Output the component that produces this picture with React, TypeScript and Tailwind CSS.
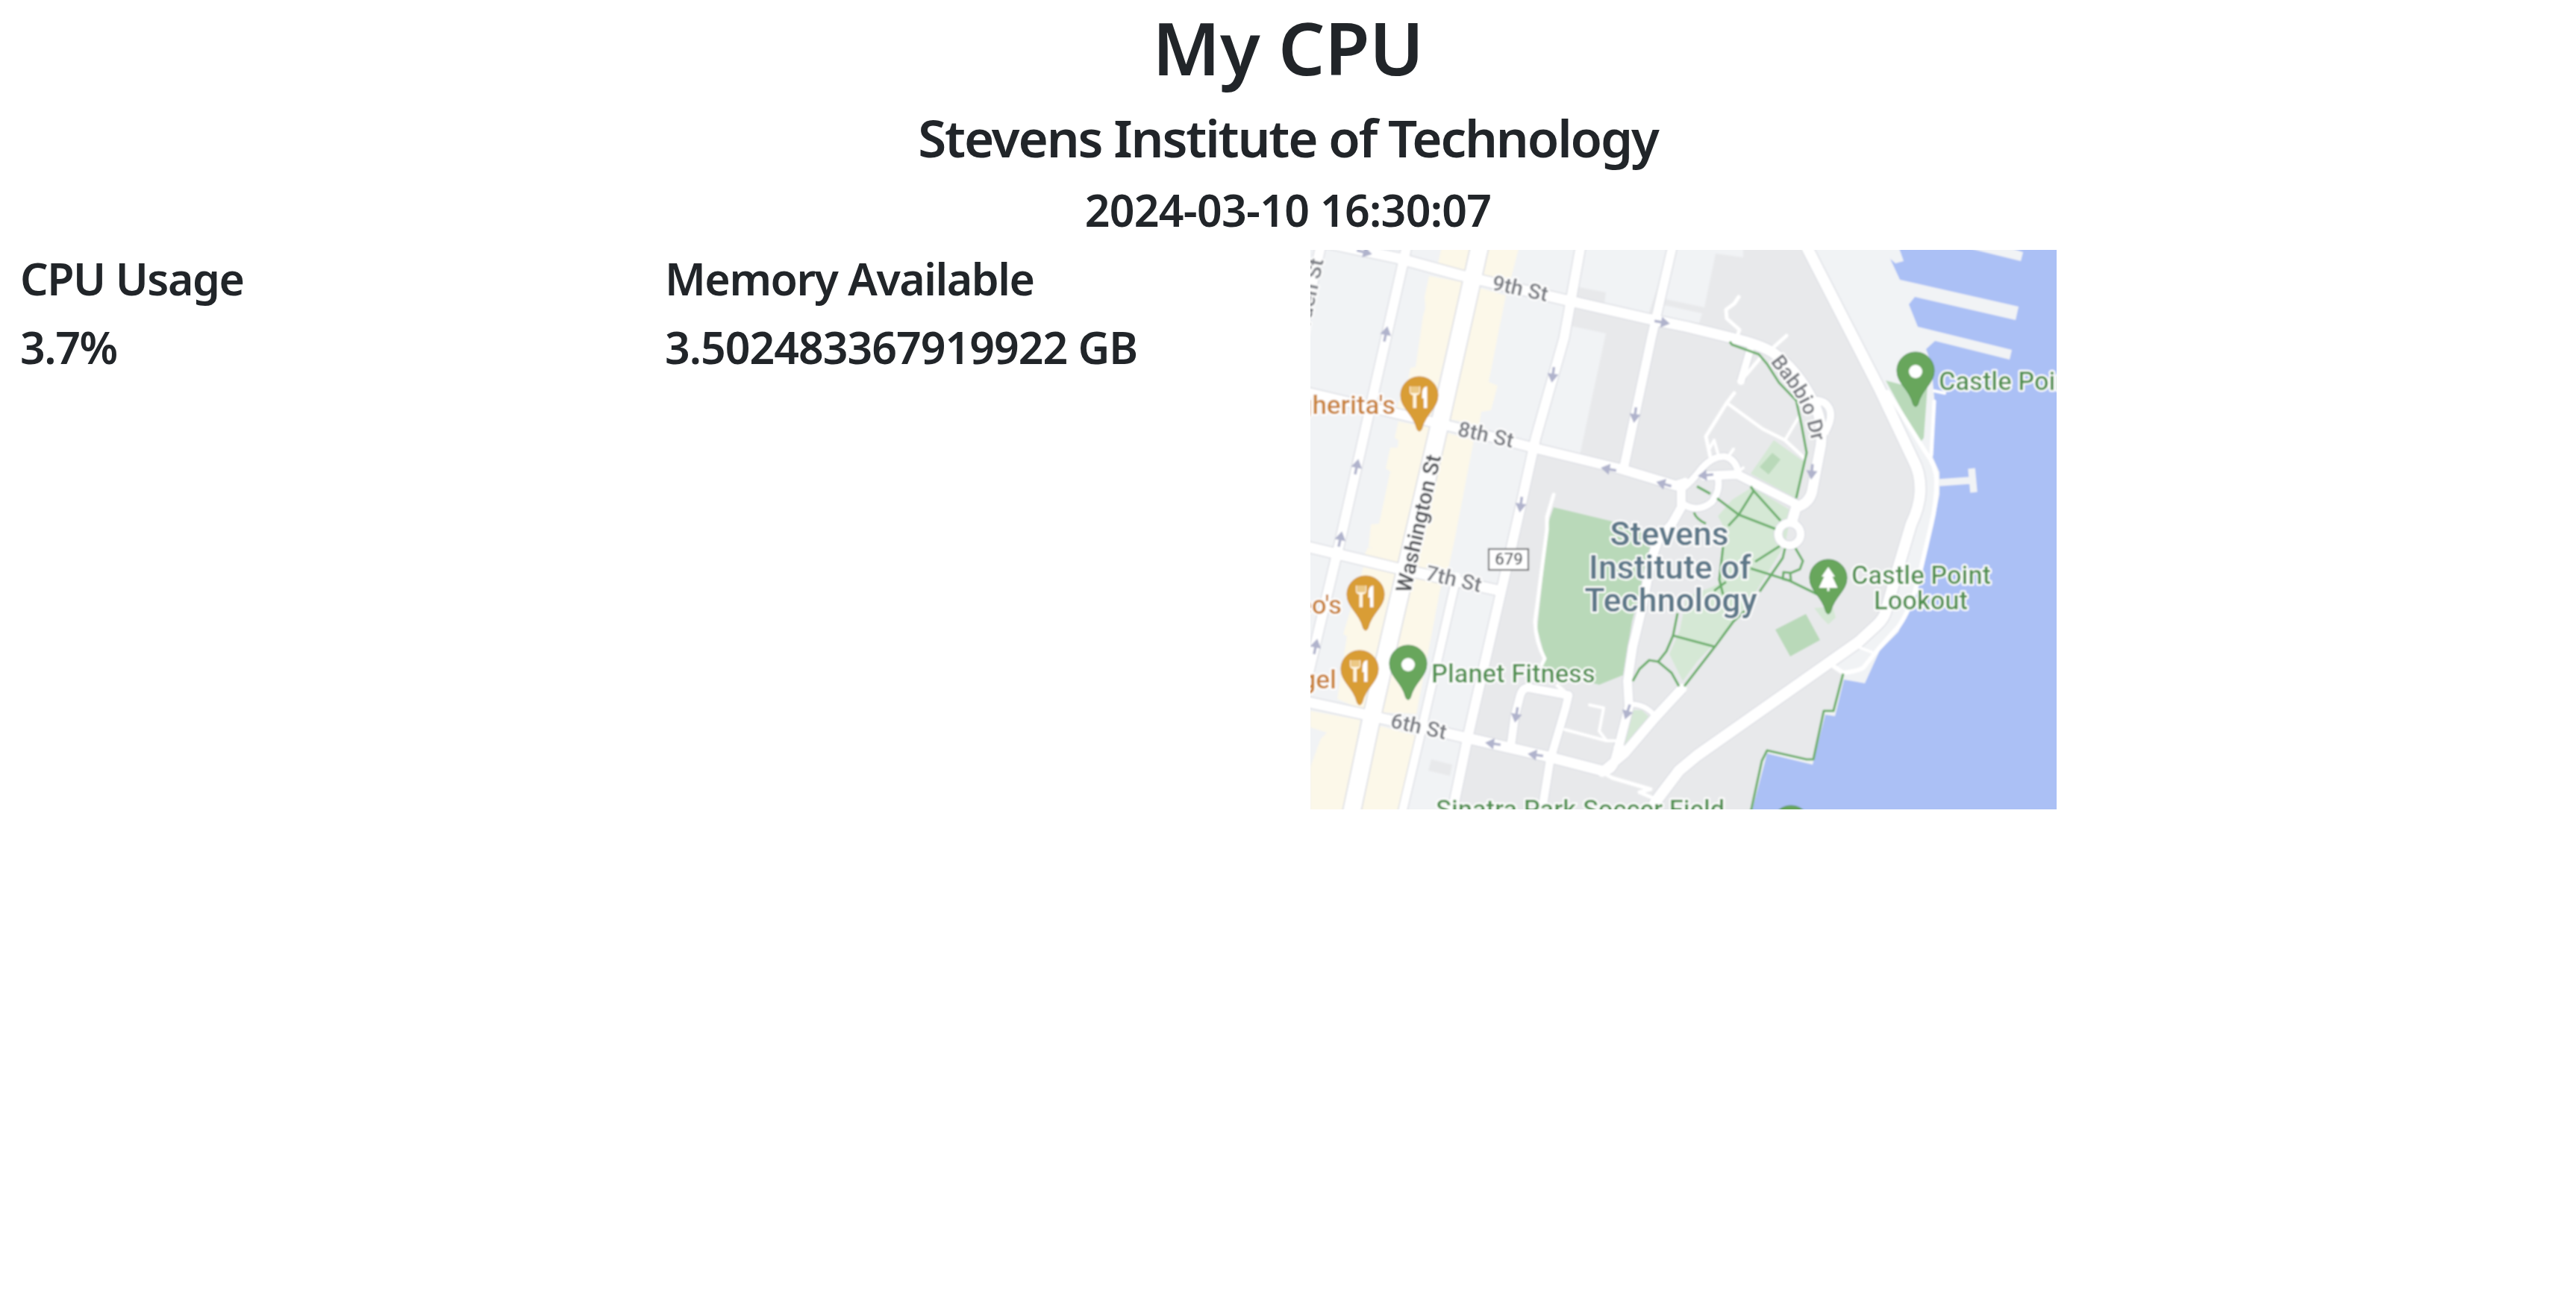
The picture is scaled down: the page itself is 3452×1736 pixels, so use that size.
import React from "react";

type Road = { d: string; w: number };

const roads: Road[] = [
  { d: "M14 -6 L-8 95", w: 13 },
  { d: "M129 -4 L41 385 L-2 565", w: 13 },
  { d: "M362 -4 L340 118 L302 252 L277 365 L254 465 L212 648 L190 754", w: 13 },
  { d: "M485 -4 L457 118 L420 292", w: 12 },
  { d: "M196 438 L167 565 L144 665 L123 754", w: 11 },
  { d: "M-20 -18 L117 11 L201 34 L337 66 L451 92 L504 103 L565 118 Q600 126 619 137 Q652 160 672 200 Q688 228 684 262 L672 325 Q668 340 651 345 L646 362", w: 14 },
  { d: "M672 202 Q690 200 696 214 Q700 226 690 244", w: 10 },
  { d: "M-4 191 L127 222 L190 237 L294 264 L417 294 L490 316 L502 312", w: 13 },
  { d: "M-4 398 L117 427 L250 456", w: 14 },
  { d: "M-4 606 L74 623 L200 652 L317 679 L390 698", w: 14 },
  { d: "M390 698 Q402 700 407 688 L414 662 L427 612 L425 578 L432 532 L444 482 L457 415 L467 386 L484 368 L497 345 L497 320", w: 12 },
  { d: "M391 700 L421 675 L461 628 L498 588", w: 13 },
  { d: "M412 668 L424 672", w: 12 },
  { d: "M427 609 Q448 608 461 624", w: 7 },
  { d: "M269 662 L274 625 L281 598 Q284 587 292 587 L346 597 L342 614 L321 685 L310 754", w: 11 },
  { d: "M498 320 Q510 312 525 292 Q540 276 555 277 Q570 280 574 300", w: 9 },
  { d: "M528 303 L572 301 L651 341", w: 12 },
  { d: "M546 305 Q550 322 538 338 Q518 354 497 339", w: 9 },
  { d: "M665 -4 L762 185 L808 282 Q818 300 817 325 Q816 345 805 368 L788 425 L772 482 Q769 494 759 503 L734 526 L697 552 L518 678 L494 698 L466 735 L450 760", w: 15 },
  { d: "M589 135 L577 176", w: 10 },
];

const lanes: Road[] = [
  { d: "M574 63 L568 72 L557 80 L558 92 L575 107 L572 116", w: 5 },
  { d: "M638 115 L619 132", w: 5 },
  { d: "M580 172 L602 146", w: 5 },
  { d: "M568 192 L558 205 L530 250 L536 278", w: 5 },
  { d: "M558 205 L606 240 L636 255 L663 280", w: 4.5 },
  { d: "M655 223 L636 255", w: 4 },
  { d: "M535 266 L541 255 L547 276", w: 4 },
  { d: "M567 267 L560 277 M574 297 L580 292", w: 4 },
  { d: "M341 643 L397 658 L409 658", w: 4 },
  { d: "M374 610 L393 614 L387 645 L397 658", w: 4 },
  { d: "M394 702 L405 708 L456 723 L441 727 L462 736", w: 5 },
  { d: "M326 328 L317 358 L317 375 L301 498 Q302 526 314 548 L310 556", w: 5 },
  { d: "M331 584 L345 596", w: 5 },
  { d: "M762 190 L774 191 L825 272 Q839 290 839 310 Q839 340 832 368 L817 432 Q806 480 788 505 L761 535 L741 560 Q736 564 714 567 L698 556", w: 6 },
  { d: "M736 533 L754 540", w: 4 },
  { d: "M836 203 L832 275", w: 5 },
  { d: "M836 189 L850 192", w: 4 },
];

const footpaths = [
  "M562 123 L565 127 L601 140 L612 153 L628 178 L651 202 L658 234 L665 272 L651 333",
  "M518 317 L536 327",
  "M545 333 L574 355 L623 374",
  "M590 317 L594 323 L574 355 L560 370",
  "M594 323 L630 363",
  "M514 352 Q517 361 530 367",
  "M629 397 L596 418",
  "M590 427 L641 443 L680 462",
  "M636 400 L633 413 L602 458",
  "M582 484 L567 498 L542 532 L501 585",
  "M486 517 L542 532",
  "M492 487 L486 517 L477 538 L466 552 L484 567 L494 585",
  "M466 552 L454 550 L441 562 L432 578",
  "M553 398 L548 442 L553 462",
  "M541 457 L557 445",
  "M650 400 L660 417 L656 428 L644 433 L634 432 L633 441 L644 444 L643 433",
  "M714 568 L701 618 L688 618 L674 683 L665 683 L612 671 L605 685 L590 754",
];

const arrows: [number, number, number][] = [
  [72, 3, 14], [101, 113, -78], [62, 291, -78], [40, 388, -78], [7, 532, -78],
  [471, 97, 10], [325, 167, 98], [435, 221, 98], [400, 294, 190], [474, 314, 196],
  [282, 341, 98], [276, 623, 100], [425, 619, 108], [245, 662, 188], [302, 677, 188],
  [530, 302, 175], [672, 297, 95],
];

const PIN =
  "M0 0C14 0 25 11 25 25C25 42 8 50 3.2 70Q0 76 -3.2 70C-8 50 -25 42 -25 25C-25 11 -14 0 0 0Z";

function Pin({ x, y, kind }: { x: number; y: number; kind: "food" | "dot" | "tree" }) {
  const food = kind === "food";
  return (
    <g transform={`translate(${x} ${y})`}>
      <path d={PIN} fill={food ? "#d99d36" : "#67a65c"} stroke={food ? "#c98c2c" : "#4f9150"} strokeWidth="1" />
      {food && (
        <g>
          <path d="M-13 13H1V20Q1 24 -4 25V42H-8.500V25Q-13 24 -13 20Z" fill="#fff6e0" />
          <path d="M-12 13H0V20Q0 22 -3 22H-9Q-12 22 -12 20Z" fill="#ecc986" />
          <path d="M4 20Q5 13 10.500 13V42H6V29H3.500Z" fill="#ffffff" />
        </g>
      )}
      {kind === "dot" && <circle cx="0" cy="26" r="9" fill="#ffffff" />}
      {kind === "tree" && (
        <path d="M0 10L9 23H5.500L12.500 38H1.500V42.500H-1.500V38H-12.500L-5.500 23H-9Z" fill="#ffffff" />
      )}
    </g>
  );
}

const halo = { stroke: "#ffffff", strokeWidth: 4.5, strokeLinejoin: "round" as const, paintOrder: "stroke" };

function CampusMap() {
  return (
    <svg viewBox="0 0 1000 750" className="block h-[750px] w-[1000px] overflow-hidden" fontFamily="Roboto, sans-serif">
      <defs>
        <filter id="soft" x="0" y="0" width="1000" height="750" filterUnits="userSpaceOnUse">
          <feGaussianBlur stdDeviation="0.9" />
        </filter>
        <path id="babbio" d="M616 150 L642 184 Q659 207 665 230 L676 272" />
      </defs>
      <rect width="1000" height="750" fill="#f1f3f5" />
      <g filter="url(#soft)">
        <rect x="-10" y="-10" width="1020" height="770" fill="#f1f3f5" />

        {/* campus ground */}
        <path
          d="M361 -5H665L762 185L808 282L817 325L805 365L771 488L734 528L697 556L714 568L701 618L688 618L674 683L612 671L605 685L590 755H191L277 365L302 252Z"
          fill="#e8e9eb"
        />
        <path d="M361 -5H484L451 92L337 66Z M484 -5H580V10L543 5L528 77L476 66Z M474 74L525 85L521 98L465 88Z" fill="#f1f3f5" />
        <path d="M360 50L396 57L394 72L352 63Z" fill="#e8e9eb" />
        <path d="M349 102L396 112L361 275L307 265Z" fill="#f1f3f5" />
        <path d="M162 683L190 690L187 705L158 698Z" fill="#e8e9eb" />

        {/* commercial strips */}
        <g fill="#fcf8e9">
          <path d="M176 -5H220L206 30L171 18Z" />
          <path d="M239 -5H280L267 45L232 34Z" />
          <path d="M159 35L204 43L161 224L115 214L118 205L131 175L134 158L141 157L151 88L154 78L153 63Z" />
          <path d="M227 51L262 61L239 177L251 182L242 215L229 217L226 235L187 227Z" />
          <path d="M118 230L160 238L120 425L71 412L77 399L84 400L78 398L81 368L92 367L107 297L101 293L107 265L117 265L118 255L113 252Z" />
          <path d="M182 245L219 255L194 385L184 432L174 455L142 622L96 620L131 430Z" />
          <path d="M71 425L117 435L74 618L36 602L49 518L44 515Z" />
          <path d="M0 618L67 630L46 755H0V693L14 655L22 647L0 640Z" />
          <path d="M92 638L141 651L118 755H67Z" />
        </g>

        {/* water and piers */}
        <path
          d="M788 -5L795 15L784 18L777 12L790 40L949 76L945 94L810 63L802 73L814 103L940 134L937 147L837 122L825 133L832 152L836 198L834 278L843 298V328L835 365L825 408L808 465L788 512L763 537L743 581L715 576L703 625L690 623L673 690L612 675L591 755H1005V-5Z"
          fill="#abc0f5"
        />
        <path d="M872 -5L891 0L952 15L955 3L930 -5Z" fill="#f1f3f5" />
        <path d="M842 312L884 309M886 293L889 325" stroke="#f1f3f5" strokeWidth="9.500" />

        {/* parks */}
        <path d="M326 345L401 363L457 378L457 398L446 442L431 498L419 570L387 583L311 562L314 545L304 508L319 365Z" fill="#b9d9b9" />
        <path d="M771 175L790 180L827 182L822 252L818 257L802 232Z" fill="#b9d9b9" />
        <g fill="#d5e8d5">
          <path d="M621 255L663 285L651 333L590 300Z" />
          <path d="M565 335L592 318L645 350L636 395L599 455L565 502L518 552L499 578L481 542L495 510L504 465L548 448L556 375L546 357Z" />
          <path d="M431 617L444 617L456 628L424 662L414 663Z" />
          <path d="M675 480L700 478L704 493L694 502L685 493Z" />
        </g>
        <path d="M619 272L630 281L614 301L602 291Z M623 509L664 488L683 523L643 545Z" fill="#b9d9b9" />

        {/* road casings, then surfaces */}
        <g fill="none" stroke="#dadce2" strokeLinejoin="round">
          {roads.map((r, i) => (
            <path key={i} d={r.d} strokeWidth={r.w + 2.5} />
          ))}
          <path d="M227 -5L173 235L106 522L81 632L55 755" strokeWidth="26" />
          <circle cx="642" cy="381" r="15" strokeWidth="13" />
        </g>
        <g fill="none" stroke="#ffffff" strokeLinejoin="round" strokeLinecap="round">
          {lanes.map((r, i) => (
            <path key={i} d={r.d} strokeWidth={r.w} />
          ))}
          {roads.map((r, i) => (
            <path key={i} d={r.d} strokeWidth={r.w} />
          ))}
          <path d="M227 -5L173 235L106 522L81 632L55 755" strokeWidth="23" />
          <circle cx="642" cy="381" r="15" strokeWidth="10.500" />
        </g>

        <g fill="none" stroke="#6caf6c" strokeWidth="3.200" strokeLinejoin="round">
          {footpaths.map((d) => (
            <path key={d} d={d} />
          ))}
        </g>

        {arrows.map(([x, y, a], i) => (
          <g key={i} transform={`translate(${x} ${y}) rotate(${a})`}>
            <path d="M-10 0H3" stroke="#b0b3cc" strokeWidth="3.500" />
            <path d="M-1 -7.500L11 0L-1 7.500Z" fill="#b0b3cc" />
          </g>
        ))}

        <rect x="239" y="401" width="53" height="28" fill="#ffffff" stroke="#6f7173" strokeWidth="2.200" />
        <text x="266" y="422" textAnchor="middle" fontSize="22" fontWeight="500" fill="#5c5f63">679</text>

        {/* street names */}
        <g fontSize="28.500" fontWeight="600" fill="#7b7e84" {...halo}>
          <text transform="translate(242 53) rotate(12.500)">9th St</text>
          <text transform="translate(196 249) rotate(12.500)">8th St</text>
          <text transform="translate(153 442) rotate(13)">7th St</text>
          <text transform="translate(106 640) rotate(12.500)">6th St</text>
          <text fontSize="28">
            <textPath href="#babbio">Babbio Dr</textPath>
          </text>
          <text transform="translate(18 14) rotate(-78)" textAnchor="end">Garden St</text>
          <text transform="translate(134 461) rotate(-77.400)" fontSize="29" fill="#54575b">Washington St</text>
        </g>

        <Pin x={146} y={170} kind="food" />
        <Pin x={74} y={437} kind="food" />
        <Pin x={66} y={537} kind="food" />
        <Pin x={131} y={530} kind="dot" />
        <Pin x={811} y={137} kind="dot" />
        <Pin x={694} y={415} kind="tree" />
        <Pin x={644} y={745} kind="dot" />

        <g fontSize="35" fontWeight="500" fill="#c98235" textAnchor="end" {...halo}>
          <text x="114" y="220">Margherita's</text>
          <text x="42" y="488">Leo's</text>
          <text x="35" y="588">Bagel</text>
        </g>
        <g fontSize="34.500" fontWeight="500" fill="#4f9150" {...halo}>
          <text x="842" y="188">Castle Point</text>
          <text x="725" y="448">Castle Point</text>
          <text x="755" y="482">Lookout</text>
          <text x="162" y="580">Planet Fitness</text>
          <text x="168" y="762">Sinatra Park Soccer Field</text>
        </g>
        <g fontSize="44.500" fontWeight="600" fill="#5d7889" textAnchor="middle" {...halo}>
          <text x="481" y="396">Stevens</text>
          <text x="482" y="441">Institute of</text>
          <text x="483" y="485">Technology</text>
        </g>
      </g>
    </svg>
  );
}

export default function App() {
  return (
    <div className="min-h-[1736px] bg-white font-['Noto_Sans',sans-serif] font-semibold text-[#212529]">
      <header className="flex flex-col items-center gap-[18px] pt-[2px] text-center whitespace-nowrap">
        <h1 className="text-[98px] leading-[122px] tracking-[-0.005em]">My CPU</h1>
        <h3 className="text-[69px] leading-[84px] tracking-[-0.031em]">Stevens Institute of Technology</h3>
        <h4 className="text-[59px] leading-[74px] tracking-[-0.012em]">2024-03-10 16:30:07</h4>
      </header>
      <main className="mt-[17px] grid grid-cols-4 whitespace-nowrap">
        <section className="flex flex-col gap-5 pt-[2px] pl-[27px] text-[59px] leading-[72px] tracking-[-0.024em]">
          <h4>CPU Usage</h4>
          <h4>3.7%</h4>
        </section>
        <section className="flex flex-col gap-5 pt-[2px] pl-[28px] text-[59px] leading-[72px]">
          <h4 className="tracking-[-0.025em]">Memory Available</h4>
          <h4 className="tracking-[-0.017em]">3.502483367919922 GB</h4>
        </section>
        <section className="pl-[30px]">
          <CampusMap />
        </section>
      </main>
    </div>
  );
}
